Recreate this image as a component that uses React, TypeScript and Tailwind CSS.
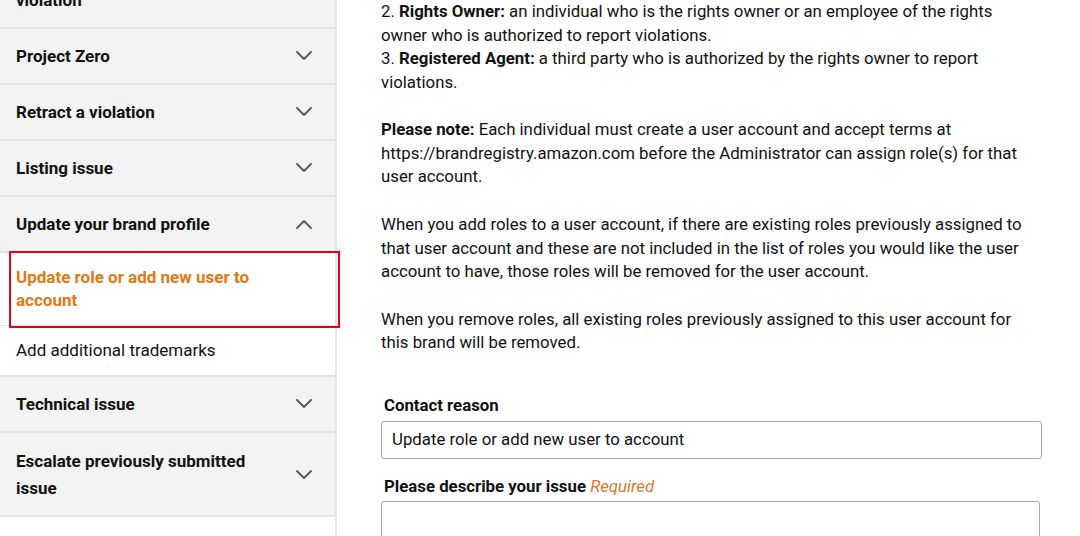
import React from 'react';

const Chevron = ({ up = false }: { up?: boolean }) => (
  <svg width="18" height="10" viewBox="0 0 18 10" className="shrink-0 text-[#555]">
    <path
      d={up ? 'M2 9L9 2L16 9' : 'M2 1L9 8L16 1'}
      fill="none"
      stroke="currentColor"
      strokeWidth="1.8"
      strokeLinecap="round"
      strokeLinejoin="round"
    />
  </svg>
);

const SectionRow = ({ title, up, tall }: { title: React.ReactNode; up?: boolean; tall?: boolean }) => (
  <div
    className={
      tall
        ? 'flex items-center justify-between border-b-2 border-[#e4e4e4] bg-[#f3f3f3] pt-[15px] pb-[13px] pl-4 pr-[22px]'
        : 'flex items-center justify-between border-b-2 border-[#e4e4e4] bg-[#f3f3f3] py-[13.5px] pl-4 pr-[22px]'
    }
  >
    <div className="w-[260px] text-[17px] font-bold leading-[27px] text-[#111]">{title}</div>
    <Chevron up={up} />
  </div>
);

export default function App() {
  return (
    <div
      className="flex h-[536px] w-[1080px] overflow-hidden bg-white text-[#111]"
      style={{ fontFamily: 'Roboto, "Liberation Sans", sans-serif' }}
    >
      {/* sidebar */}
      <aside className="relative w-[337px] shrink-0 border-r-2 border-[#e6e6e6]">
        <div className="-mt-[54px]">
          <SectionRow
            title={
              <>
                Report a brand
                <br />
                violation
              </>
            }
          />
          <SectionRow title="Project Zero" />
          <SectionRow title="Retract a violation" />
          <SectionRow title="Listing issue" />
          <SectionRow title="Update your brand profile" up />
          <div className="border-b-2 border-[#e4e4e4] bg-white">
            <div className="border-b border-[#e7e7e7] py-[13px] pl-4 text-[17px] font-bold leading-[23px] text-[#e47911]">
              Update role or add new user to
              <br />
              account
            </div>
            <div className="py-[13px] pl-4 text-[17px] leading-[23px] text-[#111]">Add additional trademarks</div>
          </div>
          <SectionRow title="Technical issue" />
          <SectionRow
            tall
            title={
              <>
                Escalate previously submitted
                <br />
                issue
              </>
            }
          />
        </div>
        {/* highlight annotation */}
        <div className="absolute left-[9px] top-[251px] h-[77px] w-[331px] border-2 border-[#e3001b]" />
      </aside>

      {/* main content */}
      <main className="flex-1 pl-[44px]">
        <div className="w-[661px] text-[16.8px] leading-[23.5px] text-[#111]">
          <p>
            2. <b>Rights Owner:</b> an individual who is the rights owner or an employee of the rights
            <br />
            owner who is authorized to report violations.
            <br />
            3. <b>Registered Agent:</b> a third party who is authorized by the rights owner to report
            <br />
            violations.
          </p>
          <p className="mt-[24px]">
            <b>Please note:</b> Each individual must create a user account and accept terms at
            <br />
            https://brandregistry.amazon.com before the Administrator can assign role(s) for that
            <br />
            user account.
          </p>
          <p className="mt-[24.5px]">
            When you add roles to a user account, if there are existing roles previously assigned to
            <br />
            that user account and these are not included in the list of roles you would like the user
            <br />
            account to have, those roles will be removed for the user account.
          </p>
          <p className="mt-[24px]">
            When you remove roles, all existing roles previously assigned to this user account for
            <br />
            this brand will be removed.
          </p>

          <div className="mt-[40px]">
            <label className="ml-[3px] block font-bold leading-[20px]">Contact reason</label>
            <div className="mt-[6px] flex h-[38px] items-center rounded-[3px] border border-[#a6a6a6] px-[10px]">
              Update role or add new user to account
            </div>
          </div>
          <div className="mt-[17px]">
            <label className="ml-[3px] block font-bold leading-[20px]">
              Please describe your issue <span className="font-normal italic text-[#d9791f]">Required</span>
            </label>
            <div className="mt-[5px] h-[80px] w-[659px] rounded-[3px] border border-[#a6a6a6]" />
          </div>
        </div>
      </main>
    </div>
  );
}
